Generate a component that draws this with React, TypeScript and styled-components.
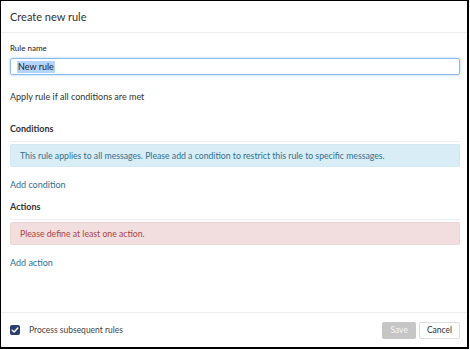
import styled, { createGlobalStyle } from 'styled-components'

const GlobalStyle = createGlobalStyle`
  html, body {
    margin: 0;
    padding: 0;
    background: #ffffff;
  }
  body {
    font-family: Lato, "Open Sans", "Liberation Sans", sans-serif;
    color: #333333;
  }
  * {
    box-sizing: border-box;
  }
`

const App: React.FC = () => (
  <>
    <GlobalStyle />
    <Dialog>
      <Header>
        <Title>Create new rule</Title>
      </Header>
      <Body>
        <Field>
          <Label>Rule name</Label>
          <Input>
            <Selected>New rule</Selected>
          </Input>
        </Field>
        <Hint>Apply rule if all conditions are met</Hint>
        <Section>
          <SectionTitle>Conditions</SectionTitle>
          <Alert kind="info">
            This rule applies to all messages. Please add a condition to restrict this rule to specific messages.
          </Alert>
          <AddLink>Add condition</AddLink>
        </Section>
        <Section>
          <SectionTitle>Actions</SectionTitle>
          <Alert kind="danger">Please define at least one action.</Alert>
          <AddLink>Add action</AddLink>
        </Section>
      </Body>
      <Footer>
        <CheckRow>
          <CheckBox>
            <svg width="8" height="8" viewBox="0 0 10 10">
              <path d="M1.5 5.2 L4 7.5 L8.5 2.5" fill="none" stroke="#ffffff" strokeWidth="1.8" strokeLinecap="round" strokeLinejoin="round" />
            </svg>
          </CheckBox>
          <CheckLabel>Process subsequent rules</CheckLabel>
        </CheckRow>
        <Buttons>
          <Button variant="disabled">Save</Button>
          <Button variant="default">Cancel</Button>
        </Buttons>
      </Footer>
    </Dialog>
  </>
)

export default App

const Dialog = styled.div`
  width: 469px;
  height: 349px;
  border-style: solid;
  border-color: #000000;
  border-width: 1px 2px 2px 1px;
  display: flex;
  flex-direction: column;
  background: #ffffff;
`
const Header = styled.div`
  height: 32px;
  padding: 0 9px;
  display: flex;
  align-items: center;
  border-bottom: 1px solid #eeeeee;
`
const Title = styled.h1`
  margin: 0;
  font-size: 11px;
  font-weight: 400;
  color: #333333;
`
const Body = styled.div`
  flex: 1;
  padding: 10px 7px 0 9px;
`
const Field = styled.div`
  display: flex;
  flex-direction: column;
`
const Label = styled.label`
  font-size: 8px;
  font-weight: 400;
  color: #222222;
  line-height: 11px;
`
const Input = styled.div`
  margin-top: 4px;
  height: 17px;
  border: 1px solid #8cbcea;
  border-radius: 2px;
  box-shadow: 0 0 3px rgba(102, 175, 233, 0.6);
  padding: 0 6px;
  display: flex;
  align-items: center;
  font-size: 9px;
  color: #1a1a1a;
`
const Selected = styled.span`
  background: #b3d4fc;
  line-height: 12px;
  padding: 0 1px;
`
const Hint = styled.div`
  margin-top: 16px;
  font-size: 9px;
  line-height: 12px;
`
const Section = styled.div`
  margin-top: 20px;
  &:last-child {
    margin-top: 10px;
  }
`
const SectionTitle = styled.h2`
  margin: 0;
  font-size: 9px;
  font-weight: 700;
  line-height: 12px;
  padding-bottom: 6px;
  border-bottom: 1px solid #eeeeee;
`
const Alert = styled.div<{ kind: 'info' | 'danger' }>`
  margin-top: 2px;
  height: 23px;
  padding: 0 9px;
  display: flex;
  align-items: center;
  font-size: 8.7px;
  border-radius: 2px;
  border: 1px solid ${p => (p.kind === 'info' ? '#d1e8f5' : '#efd5d5')};
  background: ${p => (p.kind === 'info' ? '#d9edf7' : '#f2dede')};
  color: ${p => (p.kind === 'info' ? '#31708f' : '#a94442')};
`
const AddLink = styled.a`
  display: block;
  margin-top: 12px;
  font-size: 9px;
  line-height: 12px;
  color: #2f6f95;
  cursor: pointer;
`
const Footer = styled.div`
  height: 35px;
  border-top: 1px solid #eeeeee;
  padding: 0 7px 0 9px;
  display: flex;
  align-items: center;
  justify-content: space-between;
`
const CheckRow = styled.div`
  display: flex;
  align-items: center;
  gap: 9px;
`
const CheckBox = styled.span`
  width: 10px;
  height: 10px;
  border-radius: 2px;
  background: #2b3f6e;
  display: flex;
  align-items: center;
  justify-content: center;
`
const CheckLabel = styled.span`
  font-size: 8.5px;
  color: #444444;
`
const Buttons = styled.div`
  display: flex;
  gap: 3px;
`
const Button = styled.button<{ variant: 'disabled' | 'default' }>`
  height: 17px;
  padding: 0 7px;
  font-family: inherit;
  font-size: 8.5px;
  border-radius: 2px;
  border: 1px solid ${p => (p.variant === 'disabled' ? '#c6c6c6' : '#dddddd')};
  background: ${p => (p.variant === 'disabled' ? '#c6c6c6' : '#ffffff')};
  color: ${p => (p.variant === 'disabled' ? '#f4f4f4' : '#333333')};
  cursor: ${p => (p.variant === 'disabled' ? 'default' : 'pointer')};
`
